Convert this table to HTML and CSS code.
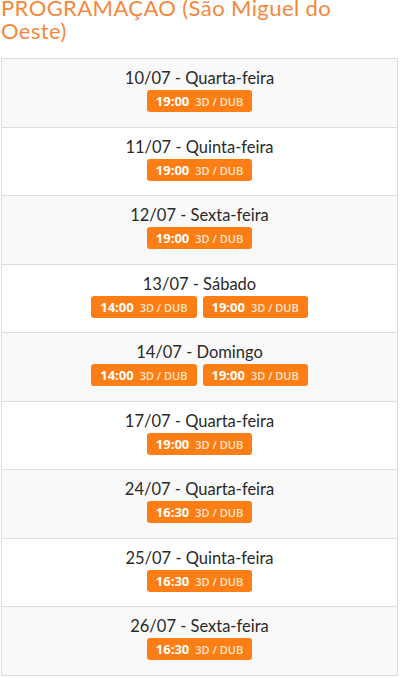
FILE: index.html
```html
<!DOCTYPE html>
<html lang="pt-BR">
<head>
<meta charset="utf-8">
<title>Programação</title>
<link rel="stylesheet" href="styles.css">
</head>
<body>
<div class="page">
  <h2 class="title">PROGRAMAÇÃO (São Miguel do Oeste)</h2>
  <div class="schedule">
    <div class="day">
      <div class="date">10/07 - Quarta-feira</div>
      <div class="times"><span class="badge"><b>19:00</b> <small>3D / DUB</small></span></div>
    </div>
    <div class="day">
      <div class="date">11/07 - Quinta-feira</div>
      <div class="times"><span class="badge"><b>19:00</b> <small>3D / DUB</small></span></div>
    </div>
    <div class="day">
      <div class="date">12/07 - Sexta-feira</div>
      <div class="times"><span class="badge"><b>19:00</b> <small>3D / DUB</small></span></div>
    </div>
    <div class="day">
      <div class="date">13/07 - Sábado</div>
      <div class="times"><span class="badge"><b>14:00</b> <small>3D / DUB</small></span><span class="badge"><b>19:00</b> <small>3D / DUB</small></span></div>
    </div>
    <div class="day">
      <div class="date">14/07 - Domingo</div>
      <div class="times"><span class="badge"><b>14:00</b> <small>3D / DUB</small></span><span class="badge"><b>19:00</b> <small>3D / DUB</small></span></div>
    </div>
    <div class="day">
      <div class="date">17/07 - Quarta-feira</div>
      <div class="times"><span class="badge"><b>19:00</b> <small>3D / DUB</small></span></div>
    </div>
    <div class="day">
      <div class="date">24/07 - Quarta-feira</div>
      <div class="times"><span class="badge"><b>16:30</b> <small>3D / DUB</small></span></div>
    </div>
    <div class="day">
      <div class="date">25/07 - Quinta-feira</div>
      <div class="times"><span class="badge"><b>16:30</b> <small>3D / DUB</small></span></div>
    </div>
    <div class="day">
      <div class="date">26/07 - Sexta-feira</div>
      <div class="times"><span class="badge"><b>16:30</b> <small>3D / DUB</small></span></div>
    </div>
  </div>
</div>
</body>
</html>
```
FILE: styles.css
```css
html, body {
  margin: 0;
  padding: 0;
  background: #fff;
}
.page {
  width: 397px;
  padding: 0 0 0 1px;
  font-family: Lato, "Open Sans", sans-serif;
}
.title {
  margin: -4px 0 0 0;
  font-weight: 400;
  font-size: 22px;
  letter-spacing: 0.4px;
  line-height: 23px;
  color: #f5883c;
}
.schedule {
  margin-top: 16px;
  border: 1px solid #ddd;
}
.day {
  border-top: 1px solid #ddd;
  padding: 8px 0 14.56px;
  text-align: center;
  background: #fff;
}
.day:first-child {
  border-top: 0;
}
.day:nth-child(odd) {
  background: #f9f9f9;
}
.date {
  font-size: 16.5px;
  line-height: 22px;
  color: #2a2a2a;
}
.times {
  margin-top: 1px;
  display: flex;
  justify-content: center;
  gap: 6px;
}
.badge {
  display: inline-flex;
  align-items: baseline;
  gap: 6px;
  height: 22px;
  box-sizing: border-box;
  padding: 3px 9px 0;
  border-radius: 3px;
  background: #fd7e14;
  color: #fff;
  font-family: "Open Sans", sans-serif;
  line-height: 17px;
}
.badge b {
  font-size: 13px;
  font-weight: 700;
}
.badge small {
  font-size: 11px;
  font-weight: 600;
  color: #fde6d2;
}
```
